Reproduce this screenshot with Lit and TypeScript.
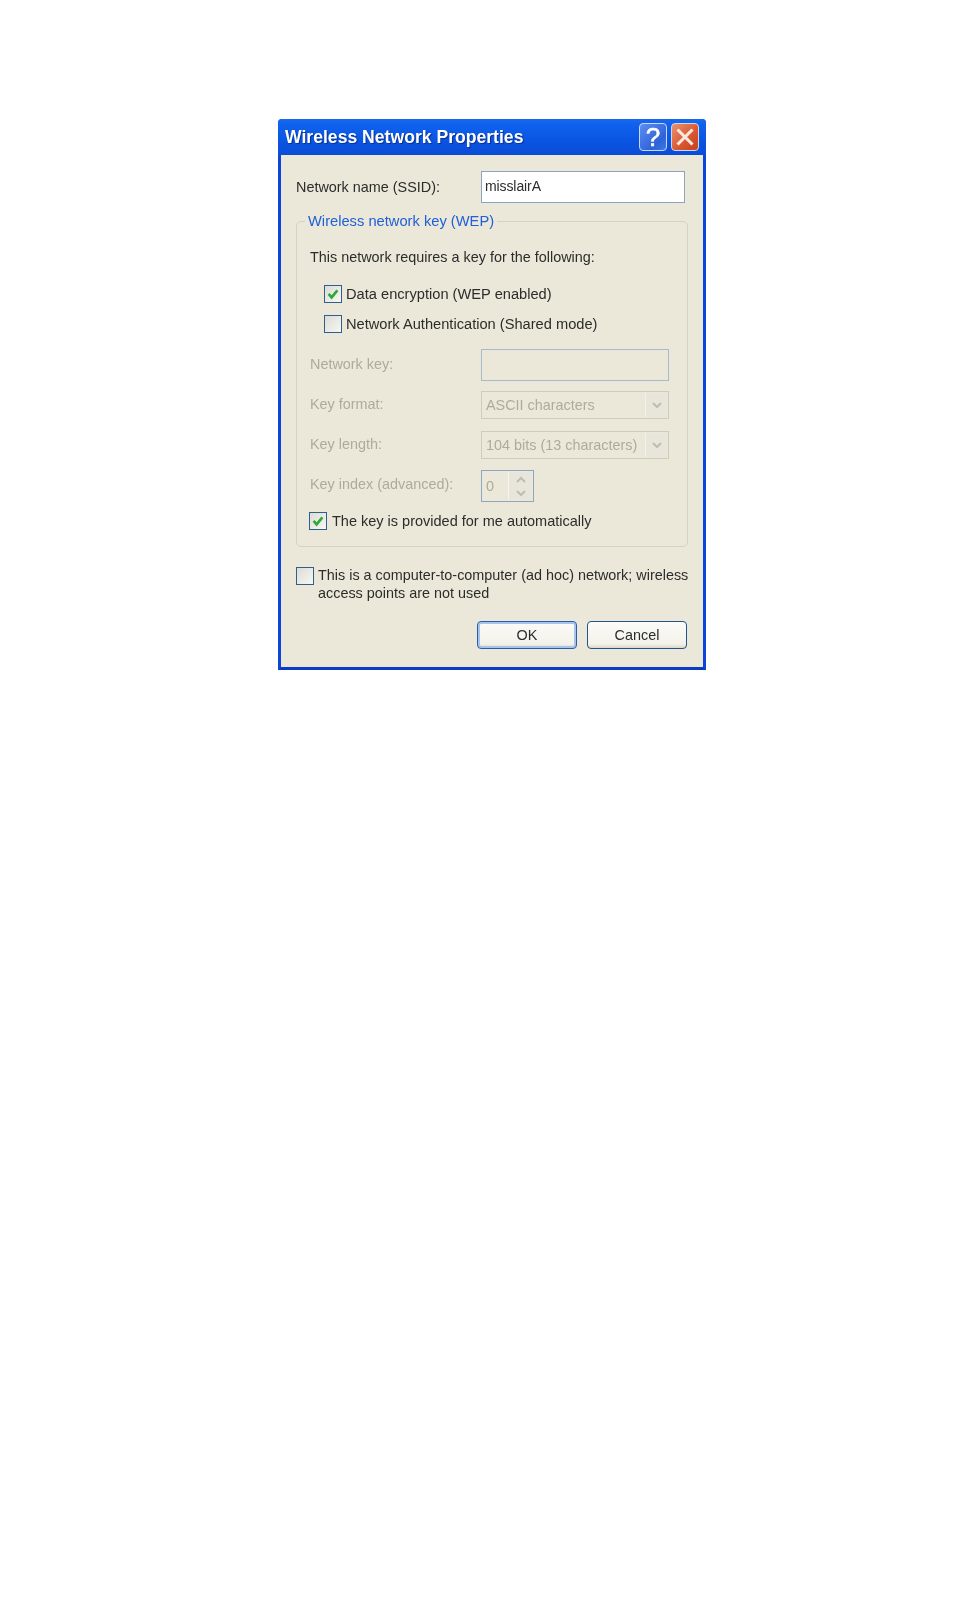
import { LitElement, html, css, svg } from "lit";
import { customElement } from "lit/decorators.js";

const check = svg`<svg class="tick" viewBox="0 0 18 18" width="18" height="18"><path d="M4.6 8.8 L7.6 12.4 L13.4 5.4" fill="none" stroke="#2fa83a" stroke-width="2.6"/></svg>`;

@customElement("app-root")
export class AppRoot extends LitElement {
  static styles = css`
    :host { display: block; height: 1608px; background: #fff; font-family: "Liberation Sans", Arial, sans-serif; font-size: 14.4px; color: #2c2c2c; overflow: hidden; }
    .page { padding: 119px 0 0 278px; }
    .dialog { width: 428px; height: 551px; box-sizing: border-box; background: #ebe8d9; border: solid #0c45dc; border-width: 0 3px 3px; border-bottom-color: #0a3cc8; border-radius: 4px 4px 0 0; display: flex; flex-direction: column; filter: blur(0.35px); }
    .titlebar { height: 36px; margin: 0 -3px; flex: none; box-sizing: border-box; padding: 0 7px 0 7px; display: flex; align-items: center; justify-content: space-between; background: linear-gradient(#1a68ee 0%, #0f62ee 15%, #0a55e2 60%, #0b4cd6 100%); border-radius: 4px 4px 0 0; }
    .title { color: #fff; font-weight: 700; font-size: 17.6px; text-shadow: 1px 1px 1px #0a2f90; }
    .tbtns { display: flex; gap: 4px; }
    .tbtn { width: 28px; height: 28px; border: 1px solid #c9d8f8; border-radius: 4px; box-sizing: border-box; display: flex; align-items: center; justify-content: center; }
    .help { background: linear-gradient(135deg, #5c8ff0, #2f62d8 70%, #3f78e6); color: #fff; font-size: 26px; font-weight: 400; -webkit-text-stroke: 0.6px #fff; }
    .close { background: linear-gradient(135deg, #ea9270, #d8562e 60%, #c2421f); }
    .body { flex: 1; padding: 0 15px; display: flex; flex-direction: column; }
    .row { display: flex; align-items: center; white-space: nowrap; }
    .label { width: 185px; flex: none; padding-bottom: 1px; }
    .ssid { margin-top: 16px; height: 32px; }
    .input { box-sizing: border-box; background: #fff; border: 1.5px solid #8ba5c0; height: 32px; width: 204px; padding: 0 0 2px 3px; font-size: 14px; letter-spacing: -0.1px; display: flex; align-items: center; }
    .group { position: relative; box-sizing: border-box; margin-top: 18px; width: 392px; height: 326px; border: 1px solid #d6d2c2; border-radius: 5px; padding: 0 0 0 13px; }
    .legend { position: absolute; left: 8px; top: -10px; padding: 0 3px; background: #ebe8d9; color: #2060d8; line-height: 18px; white-space: nowrap; font-size: 14.7px; }
    .intro { margin-top: 25px; height: 20px; line-height: 20px; white-space: nowrap; }
    .cb { box-sizing: border-box; width: 18px; height: 18px; border: 1.5px solid #2f5f8f; background: linear-gradient(135deg, #dcdcd4, #f8f8f4); flex: none; margin-right: 4px; }
    .tick { display: block; margin: -1.5px; }
    .indent { padding-left: 14px; font-size: 14.65px; }
    .c1 { margin-top: 17px; height: 20px; }
    .c2 { margin-top: 10px; height: 20px; }
    .dis { color: #aeab9c; }
    .dis .label { width: 171px; padding-bottom: 2px; }
    .k1 { margin-top: 15px; height: 32px; }
    .k2 { margin-top: 10px; height: 28px; }
    .k3 { margin-top: 12px; height: 28px; }
    .k4 { margin-top: 11px; height: 32px; }
    .k4 .label { padding-bottom: 4px; }
    .dinput { box-sizing: border-box; width: 188px; height: 32px; border: 1.5px solid #a5bbd0; }
    .select { box-sizing: border-box; width: 188px; height: 28px; border: 1px solid #cfccbc; display: flex; align-items: center; justify-content: space-between; padding: 0 1px 0 4px; }
    .arrow { width: 21px; height: 24px; background: #e8e6da; border-left: 1px solid #f4f2e8; display: flex; align-items: center; justify-content: center; }
    .spin { box-sizing: border-box; width: 53px; height: 32px; border: 1.5px solid #8ca6c4; display: flex; justify-content: space-between; padding: 0 1px 0 4px; align-items: center; }
    .spinbtns { width: 23px; height: 28px; background: #e8e6da; border-left: 1px solid #f6f4ec; display: flex; flex-direction: column; align-items: center; justify-content: space-around; }
    .auto { margin-top: 9px; height: 20px; color: #2c2c2c; font-size: 14.5px; }
    .auto .cb { margin-left: -1px; margin-right: 5px; }
    .adhoc { display: flex; align-items: flex-start; margin-top: 20px; line-height: 17.5px; height: 35px; white-space: nowrap; }
    .adhoc .cb { margin-right: 4px; }
    .buttons { margin-top: 19px; display: flex; justify-content: flex-end; gap: 10px; padding-right: 1px; }
    .btn { box-sizing: border-box; width: 100px; height: 28px; border: 1px solid #21538c; border-radius: 4px; background: linear-gradient(#fbfbf8, #f3f2ea 85%, #dcd8c8); display: flex; align-items: center; justify-content: center; }
    .def { border-color: #2a5cae; box-shadow: inset 0 0 0 2px #a9c4ec; }
  `;

  private chev(up = false) {
    return html`<svg width="12" height="7" viewBox="0 0 12 7"><path d=${up ? "M2 6 L6 2 L10 6" : "M2 1 L6 5 L10 1"} fill="none" stroke="#bfbdae" stroke-width="2"/></svg>`;
  }

  render() {
    return html`<div class="page"><div class="dialog">
      <div class="titlebar">
        <span class="title">Wireless Network Properties</span>
        <div class="tbtns">
          <div class="tbtn help">?</div>
          <div class="tbtn close"><svg width="20" height="20" viewBox="0 0 20 20"><path d="M2.5 2.5 L17.5 17.5 M17.5 2.5 L2.5 17.5" stroke="#fbe9e2" stroke-width="3"/></svg></div>
        </div>
      </div>
      <div class="body">
        <div class="row ssid"><span class="label">Network name (SSID):</span><div class="input">misslairA</div></div>
        <div class="group">
          <span class="legend">Wireless network key (WEP)</span>
          <div class="intro">This network requires a key for the following:</div>
          <div class="row indent c1"><span class="cb">${check}</span>Data encryption (WEP enabled)</div>
          <div class="row indent c2"><span class="cb"></span>Network Authentication (Shared mode)</div>
          <div class="row dis k1"><span class="label">Network key:</span><div class="dinput"></div></div>
          <div class="row dis k2"><span class="label">Key format:</span><div class="select">ASCII characters<span class="arrow">${this.chev()}</span></div></div>
          <div class="row dis k3"><span class="label">Key length:</span><div class="select">104 bits (13 characters)<span class="arrow">${this.chev()}</span></div></div>
          <div class="row dis k4"><span class="label">Key index (advanced):</span><div class="spin">0<span class="spinbtns">${this.chev(true)}${this.chev()}</span></div></div>
          <div class="row auto"><span class="cb">${check}</span>The key is provided for me automatically</div>
        </div>
        <div class="adhoc"><span class="cb"></span><span>This is a computer-to-computer (ad hoc) network; wireless<br />access points are not used</span></div>
        <div class="buttons"><div class="btn def">OK</div><div class="btn">Cancel</div></div>
      </div>
    </div></div>`;
  }
}
